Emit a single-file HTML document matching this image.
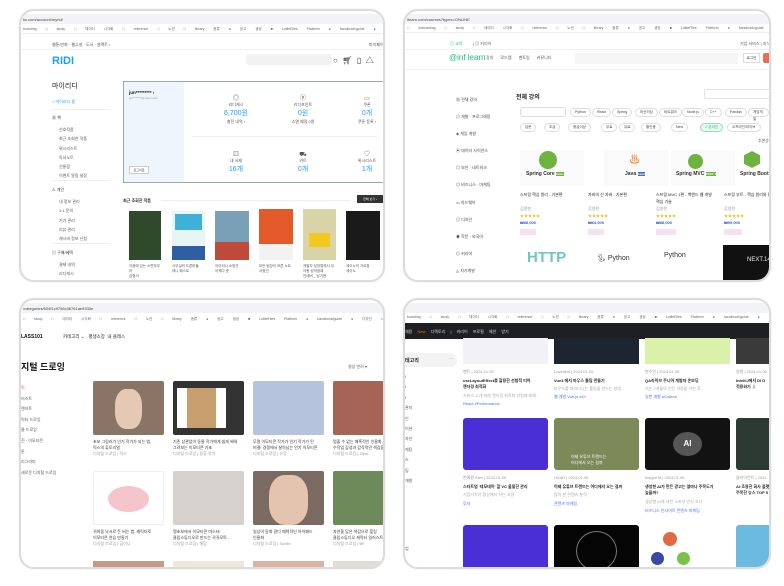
<!DOCTYPE html><html><head><meta charset="utf-8"><style>
*{margin:0;padding:0;box-sizing:border-box}
body{width:784px;height:586px;background:#fff;position:relative;overflow:hidden;font-family:"Liberation Sans","Noto Sans CJK KR",sans-serif;color:#333}
.f{position:absolute;border:2px solid #dcdcdc;border-radius:15px;overflow:hidden;background:#fff;box-shadow:0 0 2px rgba(0,0,0,.08)}
.a{position:absolute}
.t{position:absolute;font-size:4px;white-space:nowrap;color:#555}
.bar{position:absolute;left:0;right:0;height:10px;background:#f1f3f4}
.bm{position:absolute;left:0;right:0;height:9px;font-size:3.5px;color:#666;white-space:nowrap;padding-left:2px;line-height:9px;word-spacing:8px;border-bottom:1px solid #eee}
.chip{position:absolute;height:9px;border:1px solid #ddd;border-radius:5px;font-size:3.5px;line-height:7px;padding:0 4px;color:#444;background:#fff}
</style></head><body>

<!-- TOP LEFT: RIDI -->
<div class="f" style="left:19px;top:9px;width:366px;height:273px">
 <div class="bar" style="top:3px"></div><div class="t" style="left:2px;top:6px;color:#444">ks.com/account/myridi</div>
 <div class="bm" style="top:14px">boarding &#x25A1; study &#x25A1; 데이터 시각화 &#x25A1; reference &#x25A1; 노션 &#x25A1; library 종류 &#x25CF; 공고 생성 &#x25A0; LottieFiles Platform &#x25CF; handbook/guide &#x25CF; 디자인 시스템 &#x25C6; PP</div>
 <div class="t" style="left:31px;top:31px">웹툰/만화 · 웹소설 · 도서 · 셀렉트 ›</div><div class="t" style="left:348px;top:31px">마이페이지</div>
 <div class="a" style="left:0;right:0;top:38px;border-top:1px solid #f0f0f0"></div>
 <div class="t" style="left:31px;top:44px;font-size:11px;font-weight:bold;color:#1e9eff">RIDI</div>
 <div class="a" style="left:225px;top:43px;width:86px;height:11px;background:#f2f2f2;border-radius:3px"></div>
 <div class="t" style="left:312px;top:44px;font-size:8px;color:#333">&#x25CB;&nbsp;&nbsp;&#x1F6D2;&#xFE0E;&nbsp;&nbsp;&#x25AF;&nbsp;&nbsp;&#x25B3;</div>
 <div class="t" style="left:31px;top:70px;font-size:7px;color:#222">마이리디</div>
 <div class="t" style="left:31px;top:88px;color:#1e9eff">&#x2302; 마이리디 홈</div>
 <div class="a" style="left:31px;top:98px;width:58px;border-top:1px solid #eee"></div>
 <div class="t" style="left:31px;top:104px;color:#333">▦ 책</div>
 <div class="t" style="left:38px;top:114px;line-height:9.3px">선호작품<br>최근 조회한 작품<br>위시리스트<br>독서노트<br>선물함<br>이벤트 알림 설정</div>
 <div class="a" style="left:31px;top:169px;width:58px;border-top:1px solid #eee"></div>
 <div class="t" style="left:31px;top:176px;color:#333">♙ 개인</div>
 <div class="t" style="left:38px;top:186px;line-height:9.3px">내 정보 관리<br>1:1 문의<br>기기 관리<br>리뷰 관리<br>캐시비 정보 신청</div>
 <div class="a" style="left:31px;top:232px;width:58px;border-top:1px solid #eee"></div>
 <div class="t" style="left:31px;top:239px;color:#333">▤ 구매/혜택</div>
 <div class="t" style="left:38px;top:249px;line-height:9.3px">결제 내역<br>리디캐시<br>리디포인트</div>
 <!-- profile card -->
 <div class="a" style="left:102px;top:70px;width:263px;height:102px;border:1px solid #9aa;"></div>
 <div class="a" style="left:103px;top:71px;width:60px;height:100px;background:#eef5fd"></div>
 <div class="t" style="left:108px;top:79px;font-size:4.5px;color:#111;font-weight:bold">jun********* ›</div>
 <div class="t" style="left:108px;top:85px;font-size:3px;color:#999">jun*******@naver.com</div>
 <div class="a" style="left:108px;top:155px;width:20px;height:8px;border:1px solid #ccc;background:#fff;font-size:3px;line-height:6px;text-align:center">로그아웃</div>
 <div class="a" style="left:171px;top:125px;width:185px;border-top:1px solid #eee"></div>
 <div class="t" style="left:190px;top:85px;text-align:center;width:50px;line-height:6px"><span style="font-size:6px">◎</span><br>리디캐시<br><span style="font-size:7px;color:#1e9eff;line-height:11px">6,700원</span><br>충전 내역 ›</div>
 <div class="t" style="left:257px;top:85px;text-align:center;width:50px;line-height:6px"><span style="font-size:6px">ⓟ</span><br>리디포인트<br><span style="font-size:7px;color:#1e9eff;line-height:11px">0원</span><br>소멸 예정 0원</div>
 <div class="t" style="left:321px;top:85px;text-align:center;width:50px;line-height:6px"><span style="font-size:6px">▭</span><br>쿠폰<br><span style="font-size:7px;color:#1e9eff;line-height:11px">0개</span><br>쿠폰 등록 ›</div>
 <div class="t" style="left:190px;top:141px;text-align:center;width:50px;line-height:6px"><span style="font-size:6px">▥</span><br>내 서재<br><span style="font-size:7px;color:#1e9eff;line-height:11px">16개</span></div>
 <div class="t" style="left:257px;top:141px;text-align:center;width:50px;line-height:6px"><span style="font-size:6px">⛟</span><br>카트<br><span style="font-size:7px;color:#1e9eff;line-height:11px">0개</span></div>
 <div class="t" style="left:321px;top:141px;text-align:center;width:50px;line-height:6px"><span style="font-size:6px">♡</span><br>위시리스트<br><span style="font-size:7px;color:#1e9eff;line-height:11px">1개</span></div>
 <div class="t" style="left:102px;top:187px;color:#222;font-weight:bold">최근 조회한 작품</div>
 <div class="a" style="left:140px;top:189px;width:190px;border-top:1px solid #eee"></div>
 <div class="a" style="left:336px;top:184px;width:26px;height:8px;background:#333;color:#fff;font-size:3px;line-height:8px;text-align:center">전체 보기 ›</div>
 <div class="a" style="left:108px;top:200px;width:32px;height:49px;background:#2f4a2a"></div>
 <div class="a" style="left:151px;top:200px;width:33px;height:49px;background:#e9f4f4;border-bottom:14px solid #2e5fa3"><div style="margin:3px;height:16px;background:#3fb0d8"></div></div>
 <div class="a" style="left:194px;top:200px;width:34px;height:49px;background:#7aa0b8;border-bottom:18px solid #c04a3a"></div>
 <div class="a" style="left:238px;top:198px;width:34px;height:51px;background:#e35a2a;border-bottom:16px solid #f2f2f2"></div>
 <div class="a" style="left:282px;top:198px;width:33px;height:51px;background:#d9d3a8"><div style="margin:24px 6px 0;height:14px;background:#f3c81f"></div></div>
 <div class="a" style="left:325px;top:200px;width:34px;height:49px;background:#1a1a1a"></div>
 <div class="t" style="left:108px;top:253px;font-size:3.5px;line-height:5px">이중에 있는 소편하우<br>어<br>김형석</div>
 <div class="t" style="left:151px;top:253px;font-size:3.5px;line-height:5px">사무실의 도른마들<br>데니 패스트</div>
 <div class="t" style="left:194px;top:253px;font-size:3.5px;line-height:5px">아이러니 소방관<br>이케다 준</div>
 <div class="t" style="left:238px;top:253px;font-size:3.5px;line-height:5px">모든 팀장이 모른 노트<br>서정인</div>
 <div class="t" style="left:282px;top:253px;font-size:3.5px;line-height:5px">개발자 성장법에서 뒤<br>아동 성적정례<br>인테버 _ 남기현</div>
 <div class="t" style="left:325px;top:253px;font-size:3.5px;line-height:5px">세이노의 가르침<br>세이노</div>
</div>

<!-- TOP RIGHT: inflearn -->
<div class="f" style="left:403px;top:9px;width:368px;height:273px">
 <div class="bar" style="top:3px"></div><div class="t" style="left:2px;top:6px;color:#444">lfearn.com/courses?types=ONLINE</div>
 <div class="bm" style="top:13px">&#x25A1; onboarding &#x25A1; study &#x25A1; 데이터 시각화 &#x25A1; reference &#x25A1; 노션 &#x25A1; library 종류 &#x25CF; 공고 생성 &#x25A0; LottieFiles Platform &#x25CF; handbook/guide &#x25CF; 디자인 시스템</div>
 <div class="t" style="left:45px;top:30px;color:#1dc078">◎ 교육</div><div class="t" style="left:68px;top:30px">| ◎ 커리어</div><div class="t" style="left:335px;top:30px">기업 서비스 | 지식공유</div>
 <div class="a" style="left:0;right:0;top:38px;border-top:1px solid #f0f0f0"></div>
 <div class="t" style="left:44px;top:42px;font-size:8px;color:#1dc078">@inf learn</div>
 <div class="t" style="left:81px;top:44px;word-spacing:6px">강의 로드맵 멘토링 커뮤니티</div>
 <div class="a" style="left:170px;top:42px;width:163px;height:11px;background:#f5f5f5;border-radius:2px"></div>
 <div class="a" style="left:338px;top:42px;width:17px;height:10px;border:1px solid #ddd;font-size:3.5px;line-height:8px;text-align:center">로그인</div>
 <div class="a" style="left:358px;top:42px;width:20px;height:10px;background:#ee6b5a;border-radius:2px"></div>
 <div class="a" style="left:0;right:0;top:58px;border-top:1px solid #f2f2f2"></div>
 <div class="t" style="left:51px;top:80px;line-height:17.1px;color:#444">▦ 전체 강의<br>▤ 개발 · 프로그래밍<br>◈ 게임 개발<br>▣ 데이터 사이언스<br>◎ 보안 · 네트워크<br>◎ 비즈니스 · 마케팅<br>▭ 하드웨어<br>◎ 디자인<br>◉ 학문 · 외국어<br>◎ 커리어<br>◬ 자기계발</div>
 <div class="t" style="left:111px;top:81px;font-size:6px;color:#222;font-weight:bold">전체 강의</div>
 <div class="a" style="left:299px;top:78px;width:70px;height:10px;border:1px solid #e4e4e4;border-radius:2px"></div>
 <div class="a" style="left:115px;top:96px;width:46px;height:10px;border:1px solid #ddd;border-radius:3px"></div>
 <div class="chip" style="left:165px;top:97px">Python</div><div class="chip" style="left:187px;top:97px">React</div><div class="chip" style="left:207px;top:97px">Spring</div><div class="chip" style="left:230px;top:97px">머신러닝</div><div class="chip" style="left:254px;top:97px">비트워크</div><div class="chip" style="left:277px;top:97px">Node.js</div><div class="chip" style="left:300px;top:97px">C++</div><div class="chip" style="left:320px;top:97px">Pandas</div><div class="chip" style="left:343px;top:97px">게임개발</div>
 <div class="chip" style="left:115px;top:112px">입문</div><div class="chip" style="left:139px;top:112px">초급</div><div class="chip" style="left:163px;top:112px">중급이상</div><div class="chip" style="left:196px;top:112px">무료</div><div class="chip" style="left:214px;top:112px">유료</div><div class="chip" style="left:236px;top:112px">할인중</div><div class="chip" style="left:266px;top:112px">New</div><div class="chip" style="left:295px;top:112px;background:#e7f8ef;border-color:#9ed9b9;color:#1dc078">✓ 온라인</div><div class="chip" style="left:322px;top:112px">오프라인/라이브</div>
 <div class="t" style="left:353px;top:127px">추천순 ⌄</div>
 <!-- courses -->
 <div class="a" style="left:115px;top:139px;width:64px;height:36px;background:#fafafa"></div>
 <div class="a" style="left:134px;top:140px;width:18px;height:18px;border-radius:50%;background:#6db33f"></div>
 <div class="t" style="left:121px;top:160px;font-size:5px;font-weight:bold;color:#333">Spring Core <span style="background:#6db33f;color:#fff;font-size:3px">basic</span></div>
 <div class="a" style="left:199px;top:139px;width:64px;height:36px;background:#fafafa"></div>
 <div class="t" style="left:224px;top:140px;font-size:11px;color:#e76f00">♨</div>
 <div class="t" style="left:220px;top:160px;font-size:5px;font-weight:bold;color:#333">Java <span style="background:#4a6fb8;color:#fff;font-size:3px">basic</span></div>
 <div class="a" style="left:266px;top:139px;width:64px;height:36px;background:#fafafa"></div>
 <div class="a" style="left:283px;top:143px;width:15px;height:15px;border-radius:50%;background:#6db33f"></div>
 <div class="t" style="left:271px;top:160px;font-size:5px;font-weight:bold;color:#333">Spring MVC <span style="background:#6db33f;color:#fff;font-size:3px">PART 1</span></div>
 <div class="a" style="left:339px;top:140px;width:16px;height:17px;background:#6db33f;clip-path:polygon(50% 0,100% 25%,100% 75%,50% 100%,0 75%,0 25%)"></div>
 <div class="t" style="left:335px;top:160px;font-size:5px;font-weight:bold;color:#333">Spring Boot</div>
 <div class="t" style="left:115px;top:180px;color:#222;line-height:7px">스프링 핵심 원리 - 기본편<br><br><span style="color:#999">김영한</span><br><span style="color:#f5b800">★★★★★</span><br><b style="color:#3b5fd0">₩88,000</b></div>
 <div class="t" style="left:183px;top:180px;color:#222;line-height:7px">자바의 신 자바 - 기본편<br><br><span style="color:#999">김영한</span><br><span style="color:#f5b800">★★★★★</span><br><b style="color:#3b5fd0">₩64,000</b></div>
 <div class="t" style="left:251px;top:180px;color:#222;line-height:7px">스프링 MVC 1편 - 백엔드 웹 개발<br>핵심 기술<br><span style="color:#999">김영한</span><br><span style="color:#f5b800">★★★★★</span><br><b style="color:#3b5fd0">₩88,000</b></div>
 <div class="t" style="left:319px;top:180px;color:#222;line-height:7px">스프링 부트 - 핵심 원리와 활용<br><br><span style="color:#999">김영한</span><br><span style="color:#f5b800">★★★★★</span><br><b style="color:#3b5fd0">₩99,000</b></div>
 <div class="a" style="left:115px;top:218px;width:16px;height:6px;background:#f6e1f2"></div><div class="a" style="left:183px;top:218px;width:16px;height:6px;background:#f6e1f2"></div><div class="a" style="left:251px;top:218px;width:20px;height:6px;background:#f6e1f2"></div><div class="a" style="left:319px;top:218px;width:18px;height:6px;background:#f6e1f2"></div>
 <div class="t" style="left:122px;top:238px;font-size:15px;font-weight:bold;color:#6fc6c0">HTTP</div>
 <div class="t" style="left:192px;top:243px;font-size:7px;color:#333">🐍&#xFE0E; Python</div>
 <div class="t" style="left:259px;top:241px;font-size:7px;color:#333">Python</div>
 <div class="a" style="left:318px;top:234px;width:60px;height:44px;background:#111"></div>
 <div class="t" style="left:342px;top:246px;font-size:6px;color:#eee">NEXT.14</div>
</div>

<!-- BOTTOM LEFT: CLASS101 -->
<div class="f" style="left:19px;top:298px;width:366px;height:271px">
 <div class="bar" style="top:3px"></div><div class="t" style="left:2px;top:6px;color:#444">/categories/604f1c9756c36761ae9330e</div>
 <div class="bm" style="top:15px;border:none">&#x25A1; study &#x25A1; 데이터 시각화 &#x25A1; reference &#x25A1; 노션 &#x25A1; library 종류 &#x25CF; 공고 생성 &#x25A0; LottieFiles Platform &#x25CF; handbook/guide &#x25CF; 디자인 시스템</div>
 <div class="t" style="left:0;top:34px;font-size:5px;font-weight:bold;color:#111">LASS101</div>
 <div class="t" style="left:42px;top:34px;font-size:4.5px;color:#222">카테고리 ⌄&nbsp;&nbsp;&nbsp;평생소장&nbsp;&nbsp;내 클래스</div>
 <div class="t" style="left:0;top:60px;font-size:9px;font-weight:bold;color:#111">지털 드로잉</div>
 <div class="t" style="left:327px;top:64px">영상 반려 ▾</div>
 <div class="t" style="left:0;top:83px;line-height:10.6px"><span style="color:#f55">픽</span><br>러스트<br>렌아트<br>릭터 드로잉<br>물 드로잉<br>진 · 이모티콘<br>툰<br>리그라피<br>새로운 디지털 드로잉</div>
 <div class="a" style="left:72px;top:81px;width:71px;height:54px;background:#8a7466;border-radius:2px"><div style="margin:8px 22px;height:40px;background:#e5c9b5;border-radius:40%"></div></div>
 <div class="a" style="left:152px;top:81px;width:71px;height:54px;background:#333;border-radius:2px"><div style="margin:7px 18px 5px 4px;height:40px;background:#fff"><div style="margin:0 10px;height:40px;background:#c8a070"></div></div></div>
 <div class="a" style="left:232px;top:81px;width:71px;height:54px;background:#b5c4dc;border-radius:2px"></div>
 <div class="a" style="left:312px;top:81px;width:60px;height:54px;background:#a56456;border-radius:2px"></div>
 <div class="t" style="left:72px;top:139px;line-height:6px;color:#333">초보 그림러가 인기 작가가 되는 법,<br>릭스의 튜토리얼<br><span style="color:#999">디지털 드로잉 | 릭스</span></div>
 <div class="t" style="left:152px;top:139px;line-height:6px;color:#333">기존 상관없이 동물 작가에게 쉽게 배워<br>그려보는 이모티콘 기초<br><span style="color:#999">디지털 드로잉 | 동동 작가</span></div>
 <div class="t" style="left:232px;top:139px;line-height:6px;color:#333">무명 이모티콘 작가가 인기 작가가 된<br>비결! 경쟁에서 살아남는 인기 이모티콘<br><span style="color:#999">디지털 드로잉 | 유랑</span></div>
 <div class="t" style="left:312px;top:139px;line-height:6px;color:#333">멈출 수 없는 매혹적인 인물화,<br>수작업 감성과 감각적인 색감을<br><span style="color:#999">디지털 드로잉 | Ziprs</span></div>
 <div class="a" style="left:72px;top:171px;width:71px;height:54px;background:#fff;border:1px solid #eee;border-radius:2px"><div style="margin:14px 14px;height:26px;background:#f4c6cc;border-radius:50%"></div></div>
 <div class="a" style="left:152px;top:171px;width:71px;height:54px;background:#d6d1cd;border-radius:2px"></div>
 <div class="a" style="left:232px;top:171px;width:71px;height:54px;background:#7a6a62;border-radius:2px"><div style="margin:4px 16px;height:50px;background:#e4c4ae;border-radius:40%"></div></div>
 <div class="a" style="left:312px;top:171px;width:60px;height:54px;background:#6f8a5a;border-radius:2px"></div>
 <div class="t" style="left:72px;top:229px;line-height:6px;color:#333">귀여움 낙서로 돈 버는 법, 캐릭터로<br>이모티콘 연습 만들기<br><span style="color:#999">디지털 드로잉 | 곰어니</span></div>
 <div class="t" style="left:152px;top:229px;line-height:6px;color:#333">펭초보에서 이모티콘 마스터!<br>클립스튜디오로 만드는 귀귀모픽...<br><span style="color:#999">디지털 드로잉 | 해담</span></div>
 <div class="t" style="left:232px;top:229px;line-height:6px;color:#333">일상이 동화 같다 매력적인 아이패드<br>인물화<br><span style="color:#999">디지털 드로잉 | Soelin</span></div>
 <div class="t" style="left:312px;top:229px;line-height:6px;color:#333">자연을 담은 색감으로 힐링<br>클립스튜디오 캐릭터 일러스트<br><span style="color:#999">디지털 드로잉 | BF</span></div>
 <div class="a" style="left:72px;top:261px;width:71px;height:20px;background:#c79a86"></div>
 <div class="a" style="left:152px;top:261px;width:71px;height:20px;background:#eee8d8"></div>
 <div class="a" style="left:232px;top:261px;width:71px;height:20px;background:#d9b5a8"></div>
 <div class="a" style="left:312px;top:261px;width:60px;height:20px;background:#e0ddd5"></div>
</div>

<!-- BOTTOM RIGHT: blog -->
<div class="f" style="left:403px;top:298px;width:368px;height:271px">
 <div class="bar" style="top:3px"></div>
 <div class="bm" style="top:13px;border:none">boarding &#x25A1; study &#x25A1; 데이터 시각화 &#x25A1; reference &#x25A1; 노션 &#x25A1; library 종류 &#x25CF; 공고 생성 &#x25A0; LottieFiles Platform &#x25CF; handbook/guide &#x25CF; 디자인 시스템</div>
 <div class="a" style="left:0;right:0;top:23px;height:16px;background:#1e1f22"></div>
 <div class="t" style="left:0;top:29px;color:#ddd;word-spacing:4px">채용 <span style="color:#f60">New</span> 디렉토리 | 커리어 프로필 제안 받기</div>
 <div class="a" style="left:0;top:53px;width:52px;height:14px;background:#f3f3f3;border-radius:0 7px 7px 0"></div>
 <div class="t" style="left:0;top:57px;font-size:5px;color:#222;font-weight:bold">테고리</div><div class="t" style="left:44px;top:56px">···</div>
 <div class="t" style="left:0;top:72px;line-height:10.4px">I<br>I<br>I<br>관리<br>인<br>이션<br>자인<br>케팅<br>스<br>팅<br>개발</div>
 <div class="t" style="left:0;top:246px">업</div>
 <div class="a" style="left:58px;top:38px;width:85px;height:26px;background:#f2f2f6"></div>
 <div class="a" style="left:149px;top:38px;width:85px;height:26px;background:#1c2530"></div>
 <div class="a" style="left:240px;top:38px;width:85px;height:26px;background:#d9f1a8"></div>
 <div class="a" style="left:331px;top:38px;width:40px;height:26px;background:#3a3a3a"></div>
 <div class="t" style="left:58px;top:69px;color:#999">팬트 | 2024.01.05</div>
 <div class="t" style="left:58px;top:78px;color:#222;font-weight:bold;line-height:6px">useLayoutEffect를 활용한 선발적 티아<br>랜더링 최적화</div>
 <div class="t" style="left:58px;top:93px;color:#aaa">서비스 소개 미래 렌더링 최적화 방법에 대해...</div>
 <div class="t" style="left:58px;top:101px;color:#4c6ef5">React #Performance</div>
 <div class="t" style="left:149px;top:69px;color:#999">Lovefield | 2024.01.05</div>
 <div class="t" style="left:149px;top:78px;color:#222;font-weight:bold">Vue3 에서 마우스 툴팁 만들기</div>
 <div class="t" style="left:149px;top:86px;color:#aaa">마우스를 따라다니는 툴팁을 만드는 방법...</div>
 <div class="t" style="left:149px;top:94px;color:#4c6ef5">웹 개발 Vue.js #UI</div>
 <div class="t" style="left:240px;top:69px;color:#999">변수민 | 2024.01.05</div>
 <div class="t" style="left:240px;top:78px;color:#222;font-weight:bold">QA라이브 주니어 개발자 온보딩</div>
 <div class="t" style="left:240px;top:86px;color:#aaa">저는 2개월의 인턴 과정을 거친 후...</div>
 <div class="t" style="left:240px;top:94px;color:#4c6ef5">일반 개발 #Culture</div>
 <div class="t" style="left:331px;top:69px;color:#999">원향 | 2024.01.05</div>
 <div class="t" style="left:331px;top:78px;color:#222;font-weight:bold;line-height:6px">IntelliJ에서 DI D<br>적용하기 🐰</div>
 <div class="a" style="left:58px;top:118px;width:85px;height:52px;background:#4a2fd6;border-radius:3px"></div>
 <div class="a" style="left:149px;top:118px;width:85px;height:52px;background:#7c8a5a;border-radius:3px"></div>
 <div class="t" style="left:166px;top:154px;color:#fff;font-size:4px">이제 유튜브 트렌드는<br>어디에서 오는 걸까</div>
 <div class="a" style="left:240px;top:118px;width:85px;height:52px;background:#121212;border-radius:3px"><div style="margin:14px 28px;height:24px;background:#555;border-radius:50%;color:#fff;font-size:8px;font-weight:bold;text-align:center;line-height:24px">AI</div></div>
 <div class="a" style="left:331px;top:118px;width:40px;height:52px;background:#2d3a34;border-radius:3px"></div>
 <div class="t" style="left:58px;top:175px;color:#999">한예원 Alex | 2024.01.05</div>
 <div class="t" style="left:58px;top:184px;color:#222;font-weight:bold">스타트업 '데모데이' 할 VC 물밑한 관리</div>
 <div class="t" style="left:58px;top:192px;color:#aaa">기업가치가 협상에서 하는 과정</div>
 <div class="t" style="left:58px;top:201px;color:#4c6ef5">투자</div>
 <div class="t" style="left:149px;top:175px;color:#999">HSAD | 2024.01.05</div>
 <div class="t" style="left:149px;top:184px;color:#222;font-weight:bold">이제 유튜브 트렌드는 어디에서 오는 걸까</div>
 <div class="t" style="left:149px;top:192px;color:#aaa">많이 본 콘텐츠 분석</div>
 <div class="t" style="left:149px;top:201px;color:#4c6ef5">콘텐츠 마케팅</div>
 <div class="t" style="left:240px;top:175px;color:#999">Insight M | 2024.01.05</div>
 <div class="t" style="left:240px;top:184px;color:#222;font-weight:bold;line-height:6px">생성형 AI가 만든 광고는 얼마나 주목도가<br>높을까?</div>
 <div class="t" style="left:240px;top:199px;color:#aaa">생성형 AI에 대한 소비자 인식 조사</div>
 <div class="t" style="left:240px;top:208px;color:#4c6ef5">비즈니스 인사이트 콘텐츠 마케팅</div>
 <div class="t" style="left:331px;top:175px;color:#999">클라이언트 | 2024</div>
 <div class="t" style="left:331px;top:184px;color:#222;font-weight:bold;line-height:6px">AI·조용한 회사 플랫<br>주목한 뉴스 TOP 5</div>
 <div class="a" style="left:58px;top:225px;width:85px;height:50px;background:#4a2fd6;border-radius:3px"></div>
 <div class="a" style="left:149px;top:225px;width:85px;height:50px;background:#050505;border-radius:3px"><div style="margin:6px 22px;height:40px;border:1px solid #777;border-radius:50%"></div></div>
 <div class="a" style="left:258px;top:232px;width:14px;height:14px;border-radius:50%;background:#e06a45"></div>
 <div class="a" style="left:246px;top:252px;width:13px;height:13px;border-radius:50%;background:#3a4aa0"></div>
 <div class="a" style="left:272px;top:252px;width:13px;height:13px;border-radius:50%;background:#7cc24a"></div>
 <div class="a" style="left:331px;top:225px;width:40px;height:50px;background:#6bbbe0;border-radius:3px"></div>
</div>
</body></html>
